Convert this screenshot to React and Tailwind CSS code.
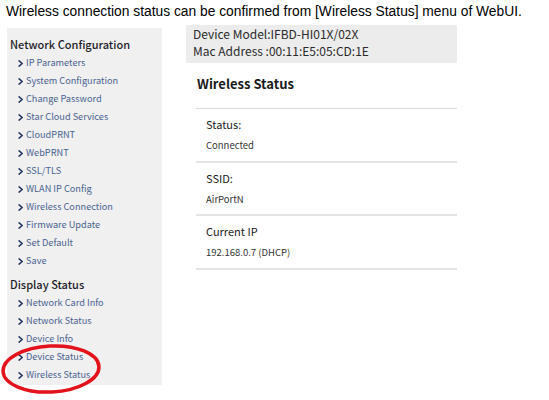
import React from "react";

const networkConfig = [
  "IP Parameters",
  "System Configuration",
  "Change Password",
  "Star Cloud Services",
  "CloudPRNT",
  "WebPRNT",
  "SSL/TLS",
  "WLAN IP Config",
  "Wireless Connection",
  "Firmware Update",
  "Set Default",
  "Save",
];

const displayStatus = ["Network Card Info", "Network Status", "Device Info", "Device Status", "Wireless Status"];

const statusRows = [
  { label: "Status:", value: "Connected" },
  { label: "SSID:", value: "AirPortN" },
  { label: "Current IP", value: "192.168.0.7 (DHCP)" },
];

const Chevron = () => (
  <svg width="5" height="7" viewBox="0 0 5 7" className="mr-[3px] shrink-0">
    <path d="M0.6 0.5 L4.2 3.5 L0.6 6.5" fill="none" stroke="#1c2f5e" strokeWidth="1.6" />
  </svg>
);

const MenuItem = ({ label }) => (
  <li className="flex items-center h-[18px] pl-[11px] text-[9.2px] text-[#4a6391]">
    <Chevron />
    <span>{label}</span>
  </li>
);

const App = () => {
  return (
    <div className="relative w-[549px] h-[400px] bg-white overflow-hidden font-['Liberation_Sans',Arial,sans-serif]">
      {/* intro sentence */}
      <p className="pl-[6px] pt-[2px] h-[25px] text-[13.8px] leading-[20px] text-black">
        Wireless connection status can be confirmed from [Wireless Status] menu of WebUI.
      </p>

      <div className="flex">
        {/* side menu */}
        <div className="ml-[7px] mt-[3px] w-[155px] h-[357px] bg-[#f0f0f0] pt-[8px] font-['Noto_Sans_CJK_JP','Liberation_Sans',sans-serif]">
          <h3 className="pl-[3px] h-[18px] text-[11px] leading-[16px] font-medium text-[#1e1e2a]">Network Configuration</h3>
          <ul>
            {networkConfig.map((item) => (
              <MenuItem key={item} label={item} />
            ))}
          </ul>
          <h3 className="pl-[3px] mt-[6px] h-[18px] text-[11px] leading-[16px] font-medium text-[#1e1e2a]">Display Status</h3>
          <ul>
            {displayStatus.map((item) => (
              <MenuItem key={item} label={item} />
            ))}
          </ul>
        </div>

        {/* main content */}
        <div className="ml-[24px] w-[271px] font-['Noto_Sans_CJK_JP','Liberation_Sans',sans-serif]">
          <div className="h-[38px] bg-[#ececec] pl-[7px] pt-[0px] text-[12px] leading-[17px] text-[#2a2a2a]">
            <div>Device Model:IFBD-HI01X/02X</div>
            <div>Mac Address :00:11:E5:05:CD:1E</div>
          </div>
          <div className="ml-[10px]">
            <h2 className="h-[46px] pt-[12px] pl-[1px] text-[13px] leading-[18px] font-bold text-[#1a1a1a] border-b border-[#dcdcdc]">
              Wireless Status
            </h2>
            {statusRows.map((row) => (
              <div key={row.label} className="h-[53.5px] pl-[10px] pt-[7px] border-b-2 border-[#e4e4e4]">
                <div className="text-[11px] leading-[16px] text-[#222]">{row.label}</div>
                <div className="mt-[6px] text-[9.5px] leading-[14px] text-[#333]">{row.value}</div>
              </div>
            ))}
          </div>
        </div>
      </div>

      {/* red highlight annotation */}
      <svg className="absolute left-0 top-[340px]" width="110" height="58" viewBox="0 0 110 58">
        <ellipse cx="51" cy="29" rx="48" ry="23" fill="none" stroke="#e3121b" strokeWidth="3.5" transform="rotate(-3 51 29)" />
      </svg>
    </div>
  );
};

export default App;
